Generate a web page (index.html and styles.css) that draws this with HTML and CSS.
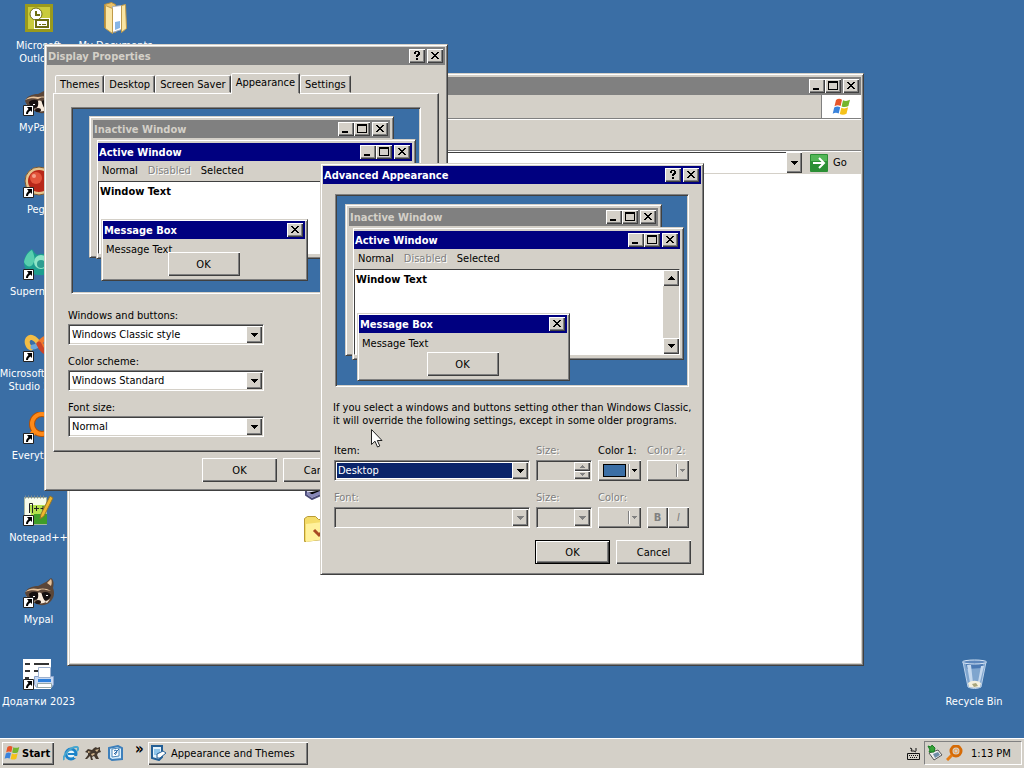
FILE: index.html
```html
<!DOCTYPE html>
<html lang="en">
<head>
    <meta charset="UTF-8">
    <meta name="viewport" content="width=device-width, initial-scale=1.0">
    <title>Desktop</title>
    <link rel="stylesheet" href="styles.css">
</head>
<body>
    <!-- shared glyphs -->
    <svg class="defs" width="0" height="0" aria-hidden="true">
        <symbol id="g-min" viewBox="0 0 12 10"><path d="M2 7h6v2H2z"/></symbol>
        <symbol id="g-max" viewBox="0 0 12 10"><path fill-rule="evenodd" d="M1 0h10v9H1zM2 2v6h8V2z"/></symbol>
        <symbol id="g-close" viewBox="0 0 12 10"><path d="M2 1h2v1h1v1h2V2h1V1h2v1H9v1H8v1H7v1h1v1h1v1h1v1H8V7H7V6H5v1H4v1H2V7h1V6h1V5h1V4H4V3H3V2H2z"/></symbol>
        <symbol id="g-help" viewBox="0 0 12 10"><path d="M4 0h4v1h1v3H8v1H7v1H5V4h1V3h1V1H5v2H3V1h1zM5 7h2v2H5z"/></symbol>
        <symbol id="g-down" viewBox="0 0 7 4"><path d="M0 0h7v1H6v1H5v1H4v1H3V3H2V2H1V1H0z"/></symbol>
        <symbol id="g-up" viewBox="0 0 7 4"><path d="M3 0h1v1h1v1h1v1h1v1H0V3h1V2h1V1h1z"/></symbol>
        <symbol id="g-small" viewBox="0 0 5 3"><path d="M0 0h5v1H4v1H3v1H2V2H1V1H0z"/></symbol>
        <symbol id="g-smallup" viewBox="0 0 5 3"><path d="M2 0h1v1h1v1h1v1H0V2h1V1h1z"/></symbol>
        <symbol id="g-shortcut" viewBox="0 0 11 11">
            <path fill="#fff" stroke="#222" stroke-width="1" d="M.5.5h10v10H.5z"/>
            <path fill="#000" d="M4 2h5v5L7.500 5.500C6 6.500 5 7.500 5 9H3c0-2 1-3.500 2.500-5z"/>
        </symbol>
        <symbol id="g-flag" viewBox="0 0 20 18">
            <path fill="#e8562a" d="M4 2c2-1.500 4-1.500 6-.3L8.600 8C6.700 7 4.600 7 2.500 8.300z"/>
            <path fill="#74b62e" d="M11 2.200c2 1 4.500 1 7-.4L16.400 8c-2.400 1.400-4.700 1.400-6.800.4z"/>
            <path fill="#3a83dc" d="M2.200 9.500c2-1.300 4.200-1.300 6-.3L6.700 15.500c-2-1-4-1-6 .3z"/>
            <path fill="#f5c21a" d="M9.300 9.700c2 1 4.500 1 6.800-.4l-1.600 6.400c-2.300 1.400-4.600 1.400-6.700.3z"/>
        </symbol>
        <symbol id="g-raccoon" viewBox="0 0 32 32">
            <path fill="#5b4638" d="M2 17c2-5 7-7 13-7 3-1 5-3 8-4l5-4c3 2 3 6 2 10 2 5 1 10-3 14-4 4-11 4-15 1-5-1-8-5-10-10z"/>
            <path fill="#e8c39b" d="M24 7l4-4c1 2 1 4 0 7zM2 16c4-4 9-4 13-3 4-1 9-1 13 2l-5-1c-4-1-6 0-8 1-4-1-8-1-13 1z"/>
            <path fill="#151010" d="M6 18c3-3 8-3 10 0 1 3-2 6-5 6-3-1-5-3-5-6zm13-1c3-2 7-1 9 2-1 4-4 6-7 5-2-2-3-4-2-7z"/>
            <path fill="#f7eadb" d="M15 17c2-1 4 0 4 2 1 3 2 5 4 7-3 2-9 2-12-1 3 0 5-3 4-8zM3 20l5 5-3-1zM27 23l-3 4-2-1z"/>
            <ellipse cx="15" cy="26" rx="3" ry="2" fill="#201512"/>
            <path fill="#fff" d="M10 20h2v1h-2zM23 19h2v1h-2z"/>
        </symbol>
    </svg>

    <main class="desktop">
        <a class="shortcut" href="#">
            <svg class="icon" viewBox="0 0 32 32">
                <path fill="#9a9a1c" d="M2 2h28v28H2z"/><path fill="#c9cb3c" d="M5 5h22v22H5z"/>
                <circle cx="13" cy="12" r="6" fill="#fff"/>
                <path fill="#fff" d="M11 16h16v11H11z"/><path fill="none" stroke="#6c6d11" stroke-width="2" d="M13 9v4h4M13 18h12v7H13z"/>
                <path stroke="#6c6d11" d="M16 22.500h2m1 0h4"/>
                <circle cx="13" cy="12" r="6" fill="none" stroke="#6c6d11" stroke-width="1"/>
            </svg>
            <span>Microsoft<br>Outlook</span>
        </a>
        <a class="shortcut" href="#">
            <svg class="icon" viewBox="0 0 32 32"><use href="#g-raccoon"/><use href="#g-shortcut" y="21" width="11" height="11"/></svg>
            <span>MyPaint</span>
        </a>
        <a class="shortcut" href="#">
            <svg class="icon" viewBox="0 0 32 32">
                <circle cx="16" cy="15" r="14" fill="#e5c58f"/><circle cx="16" cy="15" r="14" fill="none" stroke="#7d5a33"/>
                <circle cx="16" cy="15" r="11" fill="#b8281a"/><circle cx="13" cy="12" r="6" fill="#e2553c"/><circle cx="11" cy="10" r="2" fill="#f5a18a"/>
                <use href="#g-shortcut" y="21" width="11" height="11"/>
            </svg>
            <span>Pegs</span>
        </a>
        <a class="shortcut" href="#">
            <svg class="icon" viewBox="0 0 32 32">
                <path fill="#1d9e8f" d="M1 15C1 9 4 4 9 1c3 4 4 7 8 5 7-1 13 4 13 10-1 8-7 12-14 11C8 27 1 23 1 15z"/>
                <path fill="#58cfae" d="M1 14C2 9 5 4 9 2c2 5 4 9 1 14-2 4-7 3-9-2z"/>
                <circle cx="18" cy="14" r="7" fill="#8ee5c6"/><circle cx="18" cy="16" r="4" fill="#2f9d91"/>
                <use href="#g-shortcut" y="21" width="11" height="11"/>
            </svg>
            <span>Supermium</span>
        </a>
        <a class="shortcut" href="#">
            <svg class="icon" viewBox="0 0 32 32">
                <g fill="none" stroke-width="5" stroke-linecap="round">
                    <path stroke="#f3bd45" d="M16 14C12 7 7 6 5 9s0 8 3 9"/>
                    <path stroke="#6da6d8" d="M10 17c2 0 4-1 6-3"/>
                    <path stroke="#ef7a2d" d="M16 14c5-7 10-8 12-4s-2 8-6 7l-6-3"/>
                    <path stroke="#cc4427" d="M16 14c2 6 7 10 11 8"/>
                </g>
                <use href="#g-shortcut" y="21" width="11" height="11"/>
            </svg>
            <span>Microsoft Visual<br>Studio 2005</span>
        </a>
        <a class="shortcut" href="#">
            <svg class="icon" viewBox="0 0 32 32">
                <circle cx="19" cy="12" r="10" fill="none" stroke="#b35105" stroke-width="6"/><circle cx="19" cy="12" r="10" fill="none" stroke="#ff8a18" stroke-width="4"/>
                <path stroke="#ff8a18" stroke-width="5" d="M11 20l-8 9"/>
                <use href="#g-shortcut" y="21" width="11" height="11"/>
            </svg>
            <span>Everything</span>
        </a>
        <a class="shortcut" href="#">
            <svg class="icon" viewBox="0 0 32 32">
                <path fill="#f7fbea" stroke="#a9b6a0" d="M1.500 3.500h22v27h-22z"/><path stroke="#7d8a91" stroke-dasharray="1 2" stroke-width="3" d="M2 3h21"/>
                <path fill="#b4e14e" d="M6 11h17v15H9z"/><path fill="#3f9d29" d="M11 20h13v10H11z"/>
                <path fill="none" stroke="#222" stroke-width="1" d="M6.500 19V9.500h3V19M11 14.500h5m-2.500-2.500v5m4-2.500h5m-2.500-2.500v5"/>
                <path fill="#f0b62e" stroke="#91752c" d="M27 2l3 2-9 18-4 3 1-5z"/>
                <use href="#g-shortcut" y="21" width="11" height="11"/>
            </svg>
            <span>Notepad++</span>
        </a>
        <a class="shortcut" href="#">
            <svg class="icon" viewBox="0 0 32 32"><use href="#g-raccoon"/><use href="#g-shortcut" y="21" width="11" height="11"/></svg>
            <span>Mypal</span>
        </a>
        <a class="shortcut" href="#">
            <svg class="icon" viewBox="0 0 32 32">
                <path fill="#fff" d="M0 1h28v30H0z"/>
                <path stroke="#333" stroke-width="2" d="M2 6h5m4 0h15M2 13h5m4 0h7M2 20h4"/>
                <path fill="#c8d9f2" stroke="#8aa3cc" d="M11.500 18.500h19v8l-2 3h-15l-2-3z"/>
                <path fill="#fff" stroke="#9db1cf" d="M15.500 9.500h12v10h-12z"/><path fill="#2f80dc" d="M15 21h13v3H15z"/><path fill="#fff" stroke="#9aa" d="M14.500 25.500h14v4h-14z"/>
                <use href="#g-shortcut" y="21" width="11" height="11"/>
            </svg>
            <span>Додатки 2023</span>
        </a>
        <a class="shortcut" href="#">
            <svg class="icon" viewBox="0 0 32 32">
                <path fill="#e9c26b" stroke="#b28c3b" d="M4.500 2.500l7-2 4 2v28l-11-5z"/>
                <path fill="#fff" stroke="#a4acb8" d="M12.500 4.500l9-1v24l-9 3z"/><path fill="#87b5e5" d="M15 20l5-1v7l-5 2z"/>
                <path fill="#f9e5a4" stroke="#bf9a4a" d="M5.500 3.500l7 3v25l-7-5zM21.500 3.500l4-1 1 24-5 4z"/>
            </svg>
            <span>My Documents</span>
        </a>
        <a class="shortcut recycle" href="#">
            <svg class="icon" viewBox="0 0 32 32">
                <path fill="#9dbce0" fill-opacity=".7" stroke="#b9d0ea" d="M5 4l5 25c4 2 9 2 13 0l5-25z"/>
                <path fill="#4b79b3" d="M8 6h17l-1 4-15 1z"/><ellipse cx="16.500" cy="4" rx="12" ry="2" fill="#5e88bd" stroke="#d6e5f5"/>
                <path fill="#c4d8ee" d="M9 7l3 18h3L13 7zM23 8l-3 16h2l4-16z"/>
                <path fill="#f3f0df" d="M10 25c4-3 9-3 13 0l-1 4c-4 1-7 1-11 0z"/><path fill="#a8a67c" d="M14 26l4-1 2 3-4 1z"/>
            </svg>
            <span>Recycle Bin</span>
        </a>

        <section class="window explorer" aria-label="Explorer">
            <header class="titlebar inactive">
                <h2></h2>
                <button class="caption" aria-label="Minimize"><svg><use href="#g-min"/></svg></button>
                <button class="caption" aria-label="Maximize"><svg><use href="#g-max"/></svg></button>
                <button class="caption close" aria-label="Close"><svg><use href="#g-close"/></svg></button>
            </header>
            <div class="menuband"><span class="throbber"><svg width="20" height="18"><use href="#g-flag"/></svg></span></div>
            <div class="toolband"></div>
            <div class="addressband">
                <input type="text" aria-label="Address">
                <button class="drop" aria-label="Show addresses"><svg width="7" height="4"><use href="#g-down"/></svg></button>
                <button class="go">
                    <svg width="18" height="18" viewBox="0 0 18 18"><rect width="18" height="18" rx="1" fill="#2b8f35"/><path fill="#53b657" d="M1 1h16v6H1z"/><path fill="none" stroke="#fff" stroke-width="2" d="M3 9h11M9 4l5 5-5 5"/></svg>
                    Go
                </button>
            </div>
            <div class="files">
                <svg width="32" height="32" viewBox="0 0 32 32"><path fill="#dcdcf0" stroke="#4c4c78" stroke-width="2" d="M3 6h26v16L9 31l-6-4z"/><path stroke="#8888b8" stroke-width="3" d="M4 25l5 3 19-8"/></svg>
                <svg width="32" height="32" viewBox="0 0 32 32"><path fill="#f4dc69" stroke="#b99b35" d="M1.500 27.500v-23l3-2h8l3 3h13v19z"/><path fill="#fff19b" d="M3 10l25-3v17L3 28z"/><path fill="none" stroke="#a84b25" stroke-width="3" d="M11 16l5 5 9-9"/></svg>
            </div>
        </section>

        <section class="window display" aria-label="Display Properties">
            <header class="titlebar inactive">
                <h2>Display Properties</h2>
                <button class="caption" aria-label="Help"><svg><use href="#g-help"/></svg></button>
                <button class="caption close" aria-label="Close"><svg><use href="#g-close"/></svg></button>
            </header>
            <div class="tabs" role="tablist">
                <button role="tab">Themes</button>
                <button role="tab">Desktop</button>
                <button role="tab">Screen Saver</button>
                <button role="tab" aria-selected="true">Appearance</button>
                <button role="tab">Settings</button>
            </div>
            <div class="panel">
                <div class="preview">
                    <div class="window mini back">
                        <div class="titlebar inactive"><h3>Inactive Window</h3><span class="caption"><svg><use href="#g-min"/></svg></span><span class="caption"><svg><use href="#g-max"/></svg></span><span class="caption close"><svg><use href="#g-close"/></svg></span></div>
                    </div>
                    <div class="window mini front">
                        <div class="titlebar"><h3>Active Window</h3><span class="caption"><svg><use href="#g-min"/></svg></span><span class="caption"><svg><use href="#g-max"/></svg></span><span class="caption close"><svg><use href="#g-close"/></svg></span></div>
                        <div class="menu"><span>Normal</span><span class="off">Disabled</span><span>Selected</span></div>
                        <div class="client"><b>Window Text</b><div class="scroll"><i><svg width="7" height="4"><use href="#g-up"/></svg></i><i><svg width="7" height="4"><use href="#g-down"/></svg></i></div></div>
                    </div>
                    <div class="window mini message">
                        <div class="titlebar"><h3>Message Box</h3><span class="caption close"><svg><use href="#g-close"/></svg></span></div>
                        <p>Message Text</p>
                        <button class="push">OK</button>
                    </div>
                </div>
                <div class="fields">
                    <label for="style">Windows and buttons:</label>
                    <div class="combo"><select id="style"><option>Windows Classic style</option></select><i><svg width="7" height="4"><use href="#g-down"/></svg></i></div>
                    <label for="scheme">Color scheme:</label>
                    <div class="combo"><select id="scheme"><option>Windows Standard</option></select><i><svg width="7" height="4"><use href="#g-down"/></svg></i></div>
                    <label for="fontsize">Font size:</label>
                    <div class="combo"><select id="fontsize"><option>Normal</option></select><i><svg width="7" height="4"><use href="#g-down"/></svg></i></div>
                </div>
            </div>
            <footer class="actions">
                <button class="push">OK</button>
                <button class="push">Cancel</button>
                <button class="push" disabled>Apply</button>
            </footer>
        </section>

        <section class="window advanced" aria-label="Advanced Appearance">
            <header class="titlebar">
                <h2>Advanced Appearance</h2>
                <button class="caption" aria-label="Help"><svg><use href="#g-help"/></svg></button>
                <button class="caption close" aria-label="Close"><svg><use href="#g-close"/></svg></button>
            </header>
            <div class="preview">
                <div class="window mini back">
                    <div class="titlebar inactive"><h3>Inactive Window</h3><span class="caption"><svg><use href="#g-min"/></svg></span><span class="caption"><svg><use href="#g-max"/></svg></span><span class="caption close"><svg><use href="#g-close"/></svg></span></div>
                </div>
                <div class="window mini front">
                    <div class="titlebar"><h3>Active Window</h3><span class="caption"><svg><use href="#g-min"/></svg></span><span class="caption"><svg><use href="#g-max"/></svg></span><span class="caption close"><svg><use href="#g-close"/></svg></span></div>
                    <div class="menu"><span>Normal</span><span class="off">Disabled</span><span>Selected</span></div>
                    <div class="client"><b>Window Text</b><div class="scroll"><i><svg width="7" height="4"><use href="#g-up"/></svg></i><i><svg width="7" height="4"><use href="#g-down"/></svg></i></div></div>
                </div>
                <div class="window mini message">
                    <div class="titlebar"><h3>Message Box</h3><span class="caption close"><svg><use href="#g-close"/></svg></span></div>
                    <p>Message Text</p>
                    <button class="push">OK</button>
                </div>
            </div>
            <p class="note">If you select a windows and buttons setting other than Windows Classic,<br>it will override the following settings, except in some older programs.</p>
            <div class="settings">
                <div class="field">
                    <label for="item">Item:</label>
                    <div class="combo selected"><select id="item"><option>Desktop</option></select><i><svg width="7" height="4"><use href="#g-down"/></svg></i></div>
                </div>
                <div class="field off">
                    <label for="itemsize">Size:</label>
                    <div class="combo spin"><input type="text" id="itemsize" disabled><span><i><svg width="5" height="3"><use href="#g-smallup"/></svg></i><i><svg width="5" height="3"><use href="#g-small"/></svg></i></span></div>
                </div>
                <div class="field">
                    <label for="color1">Color 1:</label>
                    <button class="color" id="color1"><span class="swatch"></span><i></i><svg width="5" height="3"><use href="#g-small"/></svg></button>
                </div>
                <div class="field off">
                    <label for="color2">Color 2:</label>
                    <button class="color" id="color2" disabled><span></span><i></i><svg width="5" height="3"><use href="#g-small"/></svg></button>
                </div>
                <div class="field off">
                    <label for="font">Font:</label>
                    <div class="combo"><select id="font" disabled></select><i><svg width="7" height="4"><use href="#g-down"/></svg></i></div>
                </div>
                <div class="field off">
                    <label for="size">Size:</label>
                    <div class="combo"><select id="size" disabled></select><i><svg width="7" height="4"><use href="#g-down"/></svg></i></div>
                </div>
                <div class="field off">
                    <label for="fontcolor">Color:</label>
                    <button class="color" id="fontcolor" disabled><span></span><i></i><svg width="5" height="3"><use href="#g-small"/></svg></button>
                </div>
                <div class="field off textstyle">
                    <button disabled><b>B</b></button><button disabled><em>I</em></button>
                </div>
            </div>
            <footer class="actions">
                <button class="push default">OK</button>
                <button class="push">Cancel</button>
            </footer>
        </section>

        <svg class="cursor" width="12" height="19" viewBox="0 0 12 19"><path fill="#fff" stroke="#222" d="M.5.500v15l3.500-3.300 2.500 5.800 2.300-1-2.500-5.500h4.700z"/></svg>
    </main>

    <footer class="taskbar">
        <button class="start"><svg width="17" height="16"><use href="#g-flag"/></svg>Start</button>
        <nav class="quick">
            <a href="#" aria-label="Browser"><svg width="16" height="16" viewBox="0 0 16 16"><circle cx="8" cy="9" r="5" fill="#e6f5fb" stroke="#1b83c9" stroke-width="3"/><path fill="#1b83c9" d="M5 8h8v2H5z"/><path fill="#d4d0c8" d="M11 11h5v2h-5z"/><path fill="none" stroke="#48a7cf" stroke-width="2" d="M1 15C-1 11 8 1 14 2c2 1 1 3 0 4"/></svg></a>
            <a href="#" aria-label="Mypal"><svg width="16" height="16" viewBox="0 0 16 16"><path fill="#44382d" d="M0 7l3-3 4 1 2-2 2-1 1 1 3-1v3l1 2-3 1-1 2 2 4h-3l-2-3-2 1 1 3H6l-1-4-3 3H0l3-4V8z"/><path fill="#d0b48c" d="M3 6l3 1-3 1zM10 5l4-1-2 3zM6 9l3-1 1 1-3 2z"/></svg></a>
            <a href="#" aria-label="Show desktop"><svg width="16" height="16" viewBox="0 0 16 16"><path fill="#d7edfb" stroke="#3d7fbb" stroke-width="2" d="M2 3l9-2 4 2v11l-10 1-3-2z"/><path fill="#fff" stroke="#4b87ba" d="M5 4l7-1v8l-7 1z"/><path fill="none" stroke="#2c6ca7" d="M7 9l5-5M7 6l2-1 1 2-2 3"/></svg></a>
            <span class="more">»</span>
        </nav>
        <button class="task"><svg width="16" height="16" viewBox="0 0 16 16"><path fill="#e4f3fc" stroke="#235f96" stroke-width="2" d="M1 1h10v11l-3 3-7-2z"/><path fill="#8fc5eb" d="M3 4h6v6H3z"/><path fill="#fff" stroke="#235f96" d="M6 9l6-3 3 2-6 5-3 0z"/></svg>Appearance and Themes</button>
        <div class="notify">
            <svg width="14" height="16" viewBox="0 0 14 16"><path fill="none" stroke="#111" d="M3 3l2 1-1 2h3l2 1M9 3v3M.5 8.500h12v6H.5z"/><path stroke="#111" stroke-dasharray="1 1" d="M2 10.500h9M3 12.500h8"/></svg>
            <div class="tray">
                <svg width="16" height="16" viewBox="0 0 16 16"><path fill="#eee" stroke="#555" d="M2 8l9-3 4 5-8 5z"/><path fill="#6e8ca6" d="M6 9l5-2 2 3-5 3z"/><path fill="#36a337" stroke="#177c22" d="M1 1l3 1 1-2 3 3-1 4-5 0 1-2z"/></svg>
                <svg width="17" height="16" viewBox="0 0 17 16"><circle cx="10" cy="6" r="5" fill="none" stroke="#d66b06" stroke-width="3"/><circle cx="10" cy="6" r="2" fill="none" stroke="#f2a14d"/><path stroke="#e67c12" stroke-width="3" d="M6 10l-5 5"/></svg>
                <time>1:13 PM</time>
            </div>
        </div>
    </footer>
</body>
</html>
```
FILE: styles.css
```css
* {
    box-sizing: border-box;
}
body {
    margin: 0;
    height: 100vh;
    display: flex;
    flex-direction: column;
    overflow: hidden;
    font: 11px/13px "DejaVu Sans Condensed", "Noto Sans", sans-serif;
    color: #000;
}
h2, h3, p {
    margin: 0;
    font-size: 11px;
}
button, input, select {
    font: inherit;
    color: inherit;
    margin: 0;
    padding: 0;
    border: 0;
    border-radius: 0;
    background: #d4d0c8;
}
svg {
    display: block;
    flex: none;
}
.defs {
    position: absolute;
}

/* desktop */
.desktop {
    position: relative;
    flex: 1;
    min-height: 0;
    background: #3a6ea5;
    display: grid;
    grid-template-columns: 77px 77px 1fr 100px;
    grid-template-rows: repeat(9, 82px);
    grid-auto-flow: column;
}
.shortcut {
    display: flex;
    flex-direction: column;
    align-items: center;
    gap: 5px;
    padding-top: 2px;
    color: #fff;
    text-align: center;
    text-decoration: none;
    white-space: nowrap;
}
.icon {
    width: 32px;
    height: 32px;
}
.recycle {
    grid-column: 4;
    grid-row: 9;
}
.cursor {
    position: absolute;
    left: 371px;
    top: 429px;
}

/* windows */
.window {
    position: absolute;
    display: flex;
    flex-direction: column;
    padding: 2px;
    background: #d4d0c8;
    border: 1px solid;
    border-color: #d4d0c8 #404040 #404040 #d4d0c8;
    box-shadow: inset 1px 1px #fff, inset -1px -1px #808080;
}
.titlebar {
    display: flex;
    align-items: center;
    height: 18px;
    padding: 0 2px 0 1px;
    background: #000080;
    color: #fff;
    flex: none;
}
.titlebar.inactive {
    background: #808080;
    color: #d4d0c8;
}
.titlebar h2, .titlebar h3 {
    flex: 1;
    font-weight: bold;
    white-space: nowrap;
}
.caption {
    width: 16px;
    height: 14px;
    padding: 2px;
    background: #d4d0c8;
    color: #000;
}
.caption svg {
    width: 12px;
    height: 10px;
}
.close {
    margin-left: 2px;
}
.caption, .drop, .push, .combo i, .scroll i, .color, .textstyle button, .start, .task {
    box-shadow: inset 1px 1px #fff, inset -1px -1px #404040, inset -2px -2px #808080;
}

/* explorer */
.explorer {
    left: 67px;
    right: 160px;
    top: 73px;
    bottom: 72px;
    padding-top: 3px;
}
.menuband {
    height: 24px;
    display: flex;
    justify-content: flex-end;
    border-bottom: 1px solid #808080;
}
.throbber {
    width: 40px;
    display: grid;
    place-items: center;
    background: #fff;
    border-left: 1px solid #808080;
}
.toolband {
    height: 32px;
    border-top: 1px solid #fff;
    border-bottom: 1px solid #808080;
}
.addressband {
    display: flex;
    height: 23px;
    border-top: 1px solid #fff;
    border-bottom: 1px solid #d4d0c8;
    padding-right: 1px;
}
.addressband input {
    flex: 1;
    background: #fff;
    border-top: 1px solid #404040;
}
.drop {
    width: 16px;
    display: grid;
    place-items: center;
}
.go {
    display: flex;
    align-items: center;
    gap: 5px;
    width: 58px;
    padding-left: 8px;
}
.files {
    flex: 1;
    background: #fff;
    padding: 294px 0 0 233px;
    display: flex;
    flex-direction: column;
    gap: 14px;
}

/* display properties */
.display {
    left: 44px;
    top: 44px;
    width: 404px;
}
.tabs {
    display: flex;
    align-items: flex-end;
    height: 28px;
    padding: 0 8px;
}
.tabs button {
    height: 18px;
    padding: 0 4px;
    border: 1px solid;
    border-color: #fff #404040 transparent #fff;
    border-radius: 2px 2px 0 0;
    box-shadow: inset -1px 0 #808080;
    white-space: nowrap;
}
.tabs [aria-selected] {
    height: 21px;
    margin-bottom: -1px;
    padding-bottom: 2px;
    position: relative;
    z-index: 1;
}
.panel {
    margin: 0 6px;
    padding: 13px 17px 14px;
    border: 1px solid;
    border-color: #fff #404040 #404040 #fff;
    box-shadow: inset -1px -1px #808080;
}
.display .preview {
    height: 187px;
}
.fields {
    width: 196px;
    margin: 15px 0 0 -3px;
}
.fields label {
    display: block;
    margin-bottom: 2px;
}
.fields .combo {
    margin-bottom: 10px;
}
.fields .combo:last-child {
    margin-bottom: 0;
}
.actions {
    display: flex;
    justify-content: flex-end;
    gap: 6px;
    padding: 6px;
}
.push {
    width: 75px;
    height: 24px;
    text-align: center;
}
.push:disabled {
    color: #808080;
}
.default {
    border: 1px solid #000;
}

/* preview pane */
.preview {
    position: relative;
    background: #3a6ea5;
    border: 1px solid;
    border-color: #808080 #fff #fff #808080;
    box-shadow: inset 1px 1px #404040, inset -1px -1px #d4d0c8;
}
.mini {
    padding: 3px;
}
.display .back {
    left: 17px;
    top: 8px;
    width: 305px;
    height: 142px;
}
.display .front {
    left: 24px;
    top: 31px;
    width: 320px;
    height: 120px;
}
.display .message {
    left: 29px;
    top: 111px;
    width: 207px;
    height: 62px;
}
.advanced .back {
    left: 9px;
    top: 9px;
    width: 317px;
    height: 152px;
}
.advanced .front {
    left: 16px;
    top: 32px;
    width: 332px;
    height: 133px;
}
.advanced .message {
    left: 21px;
    top: 118px;
    width: 213px;
    height: 68px;
}
.mini.front {
    padding: 3px 3px 4px 1px;
}
.mini.message {
    padding: 1px 2px 2px 1px;
}
.menu {
    display: flex;
    gap: 10px;
    padding: 3px 4px 4px;
}
.off, .combo :disabled {
    color: #808080;
    text-shadow: 1px 1px #fff;
}
.client {
    flex: 1;
    display: flex;
    justify-content: space-between;
    padding-left: 1px;
    background: #fff;
    border: 1px solid;
    border-color: #404040 #fff #fff #404040;
}
.client b {
    padding-top: 3px;
}
.scroll {
    width: 16px;
    display: flex;
    flex-direction: column;
    justify-content: space-between;
    background: #d4d0c8;
}
.scroll i {
    height: 16px;
    display: grid;
    place-items: center;
}
.message p {
    padding: 4px 3px 0;
}
.message .push {
    position: absolute;
    left: 50%;
    bottom: 4px;
    width: 72px;
    margin-left: -37px;
}

/* combo boxes */
.combo {
    display: flex;
    height: 21px;
    padding: 1px;
    background: #fff;
    border: 1px solid;
    border-color: #808080 #fff #fff #808080;
    box-shadow: inset 1px 1px #404040, inset -1px -1px #d4d0c8;
}
.combo select, .combo input {
    flex: 1;
    min-width: 0;
    padding-left: 2px;
    appearance: none;
    background: transparent;
    outline: 0;
    opacity: 1;
}
.combo i {
    width: 16px;
    display: grid;
    place-items: center;
    pointer-events: none;
}
.combo i, .scroll i {
    background: #d4d0c8;
}
.combo.selected select {
    margin: 1px 0 1px 1px;
    padding-left: 1px;
    background: #0a246a;
    color: #fff;
}
.off .combo {
    background: #d4d0c8;
}
.off svg {
    fill: #808080;
}
.spin span {
    display: flex;
    flex-direction: column;
}
.spin i {
    flex: 1;
}

/* advanced appearance */
.advanced {
    left: 320px;
    top: 163px;
    width: 384px;
}
.advanced > .preview {
    height: 193px;
    margin: 10px 12px 0;
}
.note {
    padding: 14px 10px 17px;
    white-space: nowrap;
}
.settings {
    display: grid;
    grid-template-columns: 1fr 56px 43px 42px;
    gap: 10px 6px;
    padding: 0 12px 6px 11px;
}
.field {
    display: flex;
    flex-direction: column;
    gap: 3px;
    white-space: nowrap;
}
.color {
    height: 21px;
    display: flex;
    align-items: center;
    gap: 2px;
    padding: 0 4px 0 5px;
}
.color span {
    flex: 1;
    height: 13px;
}
.color i {
    width: 2px;
    height: 13px;
    border-left: 1px solid #808080;
    border-right: 1px solid #fff;
}
.color .swatch {
    background: #3a6ea5;
    border: 1px solid #000;
}
.textstyle {
    flex-direction: row;
    align-items: flex-end;
    gap: 0;
}
.textstyle button {
    flex: 1;
    height: 21px;
    color: #808080;
}
.advanced .actions {
    padding: 6px 10px 8px;
}

/* taskbar */
.taskbar {
    display: flex;
    align-items: center;
    height: 30px;
    padding: 0 2px;
    background: #d4d0c8;
    box-shadow: inset 0 1px #fff;
}
.start, .task {
    display: flex;
    align-items: center;
    height: 23px;
}
.start {
    width: 52px;
    gap: 1px;
    padding-left: 2px;
    font-weight: bold;
}
.quick {
    display: flex;
    align-items: center;
    gap: 6px;
    width: 94px;
    padding-left: 9px;
}
.more {
    margin: -8px 0 0 6px;
    font-size: 15px;
    font-weight: bold;
}
.task {
    width: 160px;
    gap: 4px;
    padding-left: 3px;
}
.notify {
    margin-left: auto;
    display: flex;
    align-items: center;
    gap: 3px;
}
.tray {
    display: flex;
    align-items: center;
    gap: 3px;
    width: 98px;
    height: 24px;
    padding-left: 2px;
    border: 1px solid;
    border-color: #808080 #fff #fff #808080;
}
.tray time {
    margin-left: 5px;
    white-space: nowrap;
}
```
